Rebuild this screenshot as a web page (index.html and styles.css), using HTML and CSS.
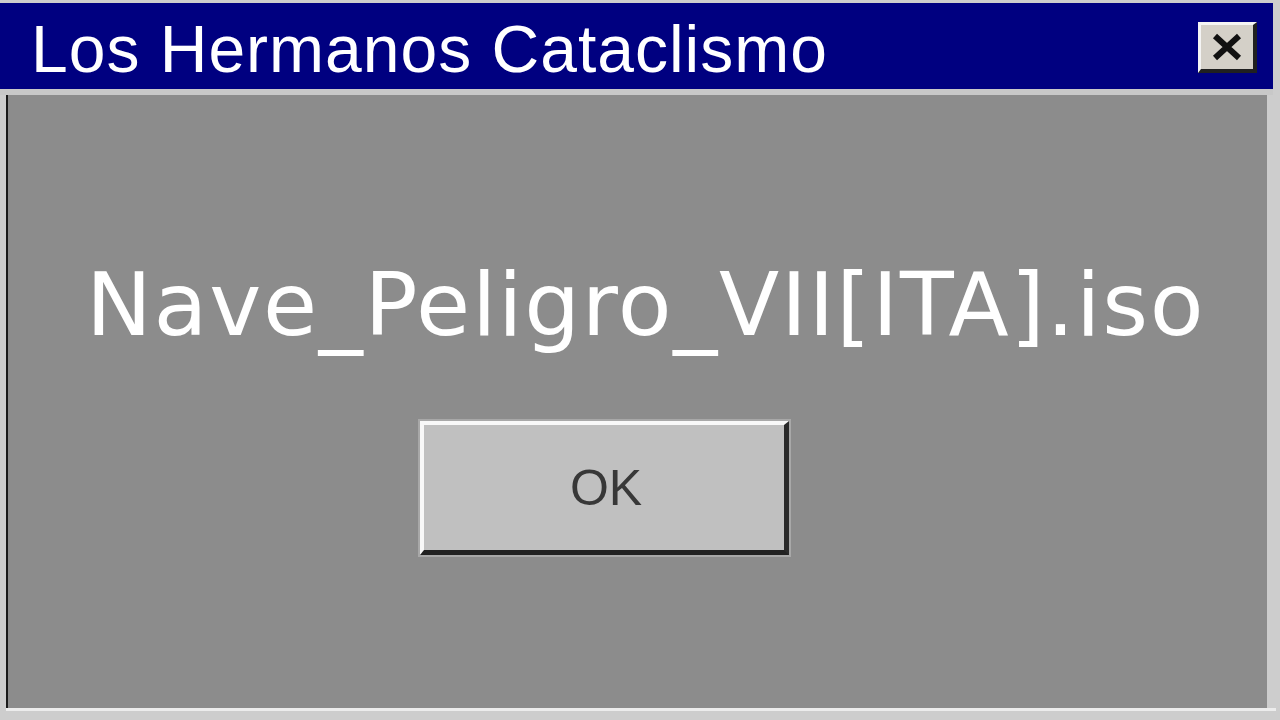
FILE: index.html
```html
<!DOCTYPE html>
<html>
<head>
<meta charset="utf-8">
<link rel="stylesheet" href="styles.css">
</head>
<body>
<div class="window">
  <div class="titlebar">
    <span class="title">Los Hermanos Cataclismo</span>
    <div class="close">
      <svg width="36" height="30" viewBox="0 0 36 30"><path d="M6 4 L30 26 M30 4 L6 26" stroke="#111" stroke-width="6" fill="none"/></svg>
    </div>
  </div>
  <div class="sep"></div>
  <div class="content">
    <div class="message">Nave_Peligro_VII[ITA].iso</div>
    <div class="button"><span class="ok">OK</span></div>
  </div>
  <div class="bottom"></div>
</div>
</body>
</html>
```
FILE: styles.css
```css
html, body {
  margin: 0;
  padding: 0;
  background: #d0d0d0;
  overflow: hidden;
}
.window {
  width: 1280px;
  height: 720px;
  background: #cdcdcd;
  padding-top: 3px;
  box-sizing: border-box;
  display: flex;
  flex-direction: column;
}
.titlebar {
  height: 86px;
  margin-right: 7px;
  background: #000080;
  display: flex;
  align-items: center;
  justify-content: space-between;
  padding-left: 31px;
  padding-right: 16px;
  box-sizing: border-box;
}
.title {
  font-family: "Liberation Sans", sans-serif;
  font-size: 66px;
  color: #fff;
  line-height: 1;
  letter-spacing: 1px;
  margin-top: 6px;
}
.close {
  width: 59px;
  height: 51px;
  box-sizing: border-box;
  background: #d4d0c8;
  border-top: 3px solid #f4f4f4;
  border-left: 3px solid #f4f4f4;
  border-right: 4px solid #202020;
  border-bottom: 4px solid #202020;
  display: flex;
  align-items: center;
  justify-content: center;
  margin-top: 2px;
}
.sep {
  height: 6px;
  background: #c8c8c8;
  margin-right: 7px;
}
.content {
  flex: 1;
  margin-left: 6px;
  margin-right: 13px;
  border-left: 2px solid #1a1a1a;
  background: #8c8c8c;
  display: flex;
  flex-direction: column;
  align-items: flex-start;
  padding-left: 78px;
  padding-top: 166px;
}
.message {
  font-family: "DejaVu Sans", sans-serif;
  font-size: 88px;
  color: #fff;
  line-height: 1;
  letter-spacing: 1.7px;
}
.button {
  margin-top: 72px;
  margin-left: 334px;
  width: 369px;
  height: 134px;
  box-sizing: border-box;
  background: #c0c0c0;
  border-top: 4px solid #f8f8f8;
  border-left: 4px solid #f8f8f8;
  border-right: 5px solid #2a2a2a;
  border-bottom: 5px solid #222;
  outline: 2px solid #a8a8a8;
  display: flex;
  align-items: center;
  justify-content: center;
}
.ok {
  font-family: "Liberation Sans", sans-serif;
  font-size: 50px;
  color: #383838;
  line-height: 1;
  margin-left: 4px;
}
.bottom {
  height: 9px;
  border-top: 3px solid #ececec;
  margin-right: 4px;
  margin-left: 6px;
  background: #cdcdcd;
}
```
